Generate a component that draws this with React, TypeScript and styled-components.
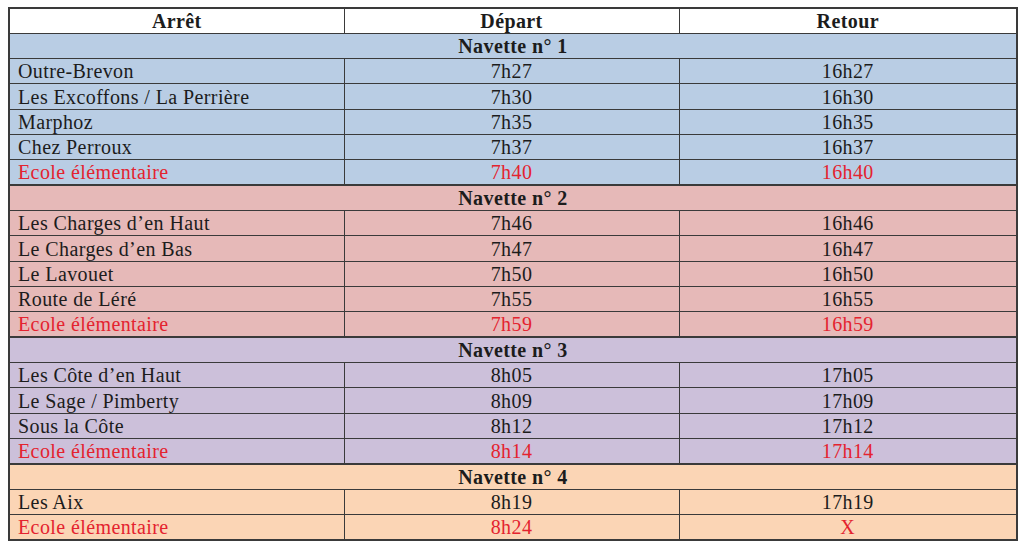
import React from "react";
import styled, { createGlobalStyle } from "styled-components";

const Global = createGlobalStyle`
  html, body { margin: 0; padding: 0; background: #ffffff; }
  body { padding: 7px 8px 0 8px; }
`;

const Table = styled.table`
  width: 1008px;
  border-collapse: collapse;
  table-layout: fixed;
  font-family: "Liberation Serif", "Times New Roman", serif;
  font-size: 20px;
  letter-spacing: 0.4px;
  color: #1c1c1c;
  border: 2px solid #3a3a3a;
`;

const Row = styled.tr<{ $bg: string }>`
  height: 25.33px;
  background: ${(p) => p.$bg};
`;

const HeadCell = styled.th`
  border: 1px solid #3a3a3a;
  font-weight: bold;
  text-align: center;
  padding: 0;
  line-height: 22px;
`;

const GroupCell = styled.td<{ $first?: boolean }>`
  border: 1px solid #3a3a3a;
  border-top-width: ${(p) => (p.$first ? "1px" : "2px")};
  font-weight: bold;
  text-align: center;
  padding: 0;
  line-height: 22px;
`;

const Cell = styled.td<{ $left?: boolean; $red?: boolean }>`
  border: 1px solid #3a3a3a;
  text-align: ${(p) => (p.$left ? "left" : "center")};
  padding: 0 0 0 ${(p) => (p.$left ? "8px" : "0")};
  color: ${(p) => (p.$red ? "#e4232f" : "#1c1c1c")};
  line-height: 22px;
  white-space: nowrap;
`;

type Stop = [string, string, string];

const groups: { title: string; bg: string; stops: Stop[] }[] = [
  {
    title: "Navette n° 1",
    bg: "#b9cde4",
    stops: [
      ["Outre-Brevon", "7h27", "16h27"],
      ["Les Excoffons / La Perrière", "7h30", "16h30"],
      ["Marphoz", "7h35", "16h35"],
      ["Chez Perroux", "7h37", "16h37"],
      ["Ecole élémentaire", "7h40", "16h40"],
    ],
  },
  {
    title: "Navette n° 2",
    bg: "#e6b9b8",
    stops: [
      ["Les Charges d’en Haut", "7h46", "16h46"],
      ["Le Charges d’en Bas", "7h47", "16h47"],
      ["Le Lavouet", "7h50", "16h50"],
      ["Route de Léré", "7h55", "16h55"],
      ["Ecole élémentaire", "7h59", "16h59"],
    ],
  },
  {
    title: "Navette n° 3",
    bg: "#ccc0da",
    stops: [
      ["Les Côte d’en Haut", "8h05", "17h05"],
      ["Le Sage / Pimberty", "8h09", "17h09"],
      ["Sous la Côte", "8h12", "17h12"],
      ["Ecole élémentaire", "8h14", "17h14"],
    ],
  },
  {
    title: "Navette n° 4",
    bg: "#fbd5b5",
    stops: [
      ["Les Aix", "8h19", "17h19"],
      ["Ecole élémentaire", "8h24", "X"],
    ],
  },
];

export default function App() {
  return (
    <>
      <Global />
      <Table>
        <colgroup>
          <col style={{ width: "335px" }} />
          <col style={{ width: "335px" }} />
          <col style={{ width: "338px" }} />
        </colgroup>
        <thead>
          <Row $bg="#ffffff">
            <HeadCell>Arrêt</HeadCell>
            <HeadCell>Départ</HeadCell>
            <HeadCell>Retour</HeadCell>
          </Row>
        </thead>
        <tbody>
          {groups.map((g, gi) => (
            <React.Fragment key={g.title}>
              <Row $bg={g.bg}>
                <GroupCell colSpan={3} $first={gi === 0}>
                  {g.title}
                </GroupCell>
              </Row>
              {g.stops.map((s, i) => {
                const red = s[0] === "Ecole élémentaire";
                return (
                  <Row $bg={g.bg} key={i}>
                    <Cell $left $red={red}>{s[0]}</Cell>
                    <Cell $red={red}>{s[1]}</Cell>
                    <Cell $red={red}>{s[2]}</Cell>
                  </Row>
                );
              })}
            </React.Fragment>
          ))}
        </tbody>
      </Table>
    </>
  );
}
